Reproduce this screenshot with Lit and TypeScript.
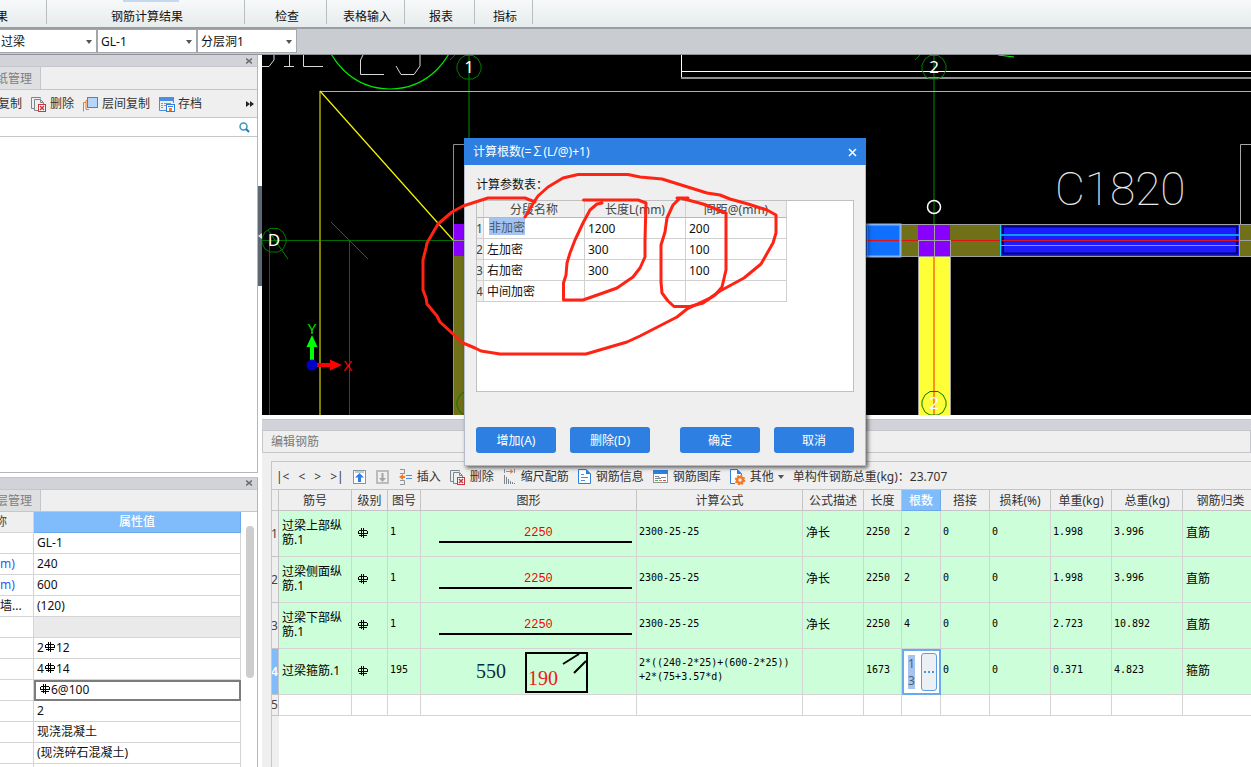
import { LitElement, html, svg, css, nothing } from "lit";
import { customElement } from "lit/decorators.js";
import { classMap } from "lit/directives/class-map.js";

const base = css`
  * { box-sizing: border-box; }
  :host {
    font: 12px/16px "Noto Sans", "Noto Sans CJK SC", sans-serif;
    color: #111;
  }
  button {
    font: inherit;
    color: inherit;
    border: 0;
    padding: 0;
    background: none;
    white-space: nowrap;
  }
  input, select, textarea {
    font: inherit;
    color: inherit;
    border: 0;
    margin: 0;
    padding: 0;
    border-radius: 0;
    outline: 0;
    appearance: none;
  }
  table { border-collapse: separate; border-spacing: 0; table-layout: fixed; }
  th, td { padding: 0; font-weight: 400; white-space: nowrap; overflow: hidden; }
  svg { display: block; flex: none; }
  .tool { display: flex; align-items: center; gap: 4px; }
`;

/* Grade symbol of HRB400 bars. */
const grade = html`<svg class="grade" width="10" height="10" viewBox="0 0 10 10" role="img" aria-label="三级钢" fill="none" stroke="#000" shape-rendering="crispEdges">
  <path d="M1 2.500H9M.5 3V6M9.500 3V6M0 5.500H10M1 7.500H9M3.500 0V9M5.500 0V10" />
</svg>`;

const icons = {
  remove: html`<svg width="16" height="16" viewBox="0 0 16 16" fill="none" stroke="#7c868e">
    <path d="M3 12.500H.5V1.500H9.500V2.500" /><path d="M7 14.500H3.500V3.500H9.500L12.500 6.500V8M9.500 4V6.500H12" />
    <rect x="7.500" y="8.500" width="7" height="7" fill="#fff" stroke="#c9373c" /><path d="M9 10l4 4M13 10l-4 4" stroke="#c9373c" stroke-width="1.500" /></svg>`,
  layers: html`<svg width="16" height="16" viewBox="0 0 16 16" fill="none">
    <path d="M3 6.500H.5V15.500M5 4.500H3V13.500H6" stroke="#f07a28" />
    <rect x="4.500" y="1.500" width="10" height="10" fill="#b5d6fb" stroke="#3f87d6" /></svg>`,
  archive: html`<svg width="16" height="16" viewBox="0 0 16 16" fill="none">
    <path d="M.5 4V14.500H7" stroke="#4a8fdf" /><path d="M14.500 4V7" stroke="#4a8fdf" /><rect width="15" height="4" y="1" fill="#4a8fdf" />
    <path d="M2 7.500h2M2 9.500h2M2 11.500h2M5 7.500h7M5 9.500h2" stroke="#8b959c" />
    <rect x="7.500" y="8.500" width="8" height="7" fill="#fff" stroke="#2d7fe1" /><rect x="10" y="12" width="3" height="3" fill="#f07a28" /><path d="M9 10.500h5" stroke="#2d7fe1" /></svg>`,
  up: html`<svg width="14" height="14" viewBox="0 0 14 14" fill="none"><rect x=".5" y=".5" width="12" height="13" fill="#fff" stroke="#8a949b" />
    <path d="M2 2h9" stroke="#8a949b" /><path d="M6.500 3l4.500 4.500H8V12H5V7.500H2z" fill="#2d7fe1" /></svg>`,
  down: html`<svg width="14" height="14" viewBox="0 0 14 14" fill="none"><rect x="1" y="1" width="11" height="12" stroke="#bcbcbc" stroke-width="2" />
    <path d="M6.500 12L3 8H5.500V3h2V8H10z" fill="#a4a4a4" /></svg>`,
  insert: html`<svg width="14" height="16" viewBox="0 0 14 16" fill="none">
    <path d="M1 .5H5.500V4.500H1M1 11.500H5.500V15.500H1" stroke="#8a949b" /><path d="M7 6.500h6M7 9.500h6" stroke="#4a8fdf" />
    <path d="M0 8l4-3v2h2v2H4v2z" fill="#f07a28" /></svg>`,
  scale: html`<svg width="14" height="16" viewBox="0 0 14 16" fill="none">
    <path d="M1.500 0V4M11.500 0V4" stroke="#8a949b" /><path d="M3 2.500h6" stroke="#f07a28" /><path d="M7.500 0l3 2.500-3 2.500z" fill="#f07a28" />
    <path d="M1.500 6V15M3.500 8V15M5.500 10V15M7.500 12V15M9.500 13V15M11.500 14V15" stroke="#7c868e" /></svg>`,
  info: html`<svg width="14" height="16" viewBox="0 0 14 16" fill="none">
    <path d="M.5 .5H8L12.500 5V14.500H.5z" fill="#fff" stroke="#2d7fe1" /><path d="M8 0v5h5z" fill="#2d7fe1" />
    <path d="M3 5.500h3M3 8.500h7M3 11.500h4" stroke="#4a8fdf" /></svg>`,
  gallery: html`<svg width="16" height="14" viewBox="0 0 16 14" fill="none">
    <rect x=".5" y=".5" width="14" height="12" fill="#fff" stroke="#8a949b" /><rect width="15" height="4" fill="#2d7fe1" />
    <path d="M2 6.500h4v2H2M8 7.500h5M6 8.500h2" stroke="#7c868e" /><path d="M2 10.500h3" stroke="#4caf50" /><path d="M6 10.500h3" stroke="#f07a28" /><path d="M10 10.500h3" stroke="#e04848" /></svg>`,
  other: html`<svg width="16" height="16" viewBox="0 0 16 16" fill="none">
    <path d="M5 14.500H.5V.5H7L11.500 5V6" fill="#fff" stroke="#2d7fe1" /><path d="M7 0v5h5z" fill="#2d7fe1" />
    <circle cx="10" cy="11" r="3" stroke="#f07a28" stroke-width="2.500" /><circle cx="10" cy="11" r="4.500" stroke="#f07a28" stroke-width="1.500" stroke-dasharray="2 1.500" /></svg>`,
};

const arrow = html`<svg width="6" height="4" viewBox="0 0 6 4"><path d="M0 0h6L3 4z" fill="#555" /></svg>`;

@customElement("ribbon-bar")
class RibbonBar extends LitElement {
  static styles = [base, css`
    :host { display: block; }
    .tabs {
      display: flex;
      height: 29px;
      border-bottom: 2px solid #9a9ea3;
      background: linear-gradient(#f7f9fa, #e6ebec);
      overflow: hidden;
    }
    .tab { flex: none; height: 27px; display: grid; align-items: center; padding: 7px 0 0 2px; position: relative; }
    .tab::after { content: ""; position: absolute; right: 0; top: 0; height: 24px; border-right: 1px solid #b9bdc0; }
    .w0 { width: 47px; } .w1 { width: 198px; } .w2 { width: 82px; }
    .w3 { width: 78px; } .w4 { width: 70px; } .w5 { width: 58px; }
    .w0 { justify-items: start; padding-left: 0; text-indent: -4px; }
    .w1::before { content: ""; position: absolute; left: 76px; top: 0; width: 56px; height: 2px; background: #c6d8f0; }
    .combos { display: flex; height: 26px; background: #c9ccd1; border-bottom: 1px solid #8f9398; }
    .combo { position: relative; width: 100px; height: 24px; display: flex; }
    .combo.first { width: 97px; }
    .combo select {
      width: 100%; height: 24px; border: 1px solid #a3a6aa; background: #fff; padding: 2px 3px 0;
    }
    .first select { border-left: 0; padding-left: 1px; }
    .combo svg { position: absolute; right: 5px; top: 11px; pointer-events: none; }
  `];
  render() {
    const names = ["果", "钢筋计算结果", "检查", "表格输入", "报表", "指标"];
    return html`
      <nav class="tabs">${names.map((n, i) => html`<button class="tab w${i}">${n}</button>`)}</nav>
      <div class="combos">
        ${["过梁", "GL-1", "分层洞1"].map((v, i) => html`
          <label class="combo ${i ? "" : "first"}"><select aria-label=${v}><option>${v}</option></select>${arrow}</label>`)}
      </div>`;
  }
}

@customElement("side-dock")
class SideDock extends LitElement {
  static styles = [base, css`
    :host { display: flex; flex-direction: column; gap: 4px; background: #fff; overflow: hidden; }
    .panel {
      display: flex; flex-direction: column; min-height: 0; overflow: hidden;
      border: 1px solid #b4b6ba; border-left: 0; background: #fff;
    }
    .upper { flex: 418 1 0; border-top: 0; }
    .lower { flex: 290 1 0; border-bottom: 0; border-top-color: #c4c6cb; }
    .strip {
      flex: none; height: 12px; background: #d2d3d8; border-bottom: 1px solid #c4c6cb;
      display: flex; justify-content: flex-end; align-items: center; padding-right: 5px;
    }
    .tabs { flex: none; height: 23px; background: #efefef; border-bottom: 1px solid #c4c6cb; display: flex; overflow: hidden; }
    .lower .tabs { height: 22px; }
    .tab { width: 41px; padding-top: 2px; background: #dedfe1; border-right: 1px solid #c4c6cb; color: #7e7e7e; text-align: left; text-indent: -4px; overflow: hidden; }
    .tools { flex: none; height: 28px; padding-top: 1px; background: #efefef; border-bottom: 1px solid #c4c6cb; display: flex; align-items: center; gap: 9px; color: #333; }
    .tools .tool { gap: 3px; }
    .tools .tool:first-child { width: 22px; text-indent: -2px; overflow: hidden; }
    .more { margin-left: auto; padding-right: 3px; }
    .search { flex: none; height: 19px; border-bottom: 1px solid #c4c6cb; display: flex; align-items: center; padding-right: 7px; }
    .search input { flex: 1; min-width: 0; height: 16px; }
    .props { display: flex; min-height: 0; flex: 1; }
    table { flex: 1; align-self: flex-start; }
    .name { width: 34px; }
    tr { height: 21px; }
    th, td { height: 21px; padding-top: 1px; border-right: 1px solid #d4d4d4; border-bottom: 1px solid #d4d4d4; }
    th { background: #efefef; text-align: left; text-indent: -5px; color: #444; }
    th.value { background: #80bbfc; border-color: #6ca8ea; color: #fff; text-align: center; text-indent: 0; font-weight: 500; }
    td.value { padding-left: 3px; }
    .link { color: #2c5cf0; }
    td.shade { background: #eaeaea; }
    td.active { outline: 2px solid #7c7c7c; outline-offset: -2px; padding-left: 5px; }
    .cell { display: inline-flex; align-items: center; vertical-align: top; }
    .grade { margin: 0 1px 2px 1px; }
    .bar { width: 16px; flex: none; padding: 14px 3px 0 5px; }
    .thumb { width: 8px; height: 152px; border-radius: 4px; background: #cdcdcd; }
  `];
  render() {
    const close = html`<svg width="6" height="6" viewBox="0 0 6 6" stroke="#6c6c6c" stroke-width="1.500"><path d="M0 .5l6 5M6 .5l-6 5" /></svg>`;
    const rows: [unknown, unknown, string?][] = [
      ["", "GL-1"], ["m)", "240"], ["m)", "600"], ["墙...", "(120)"], ["", "", "shade"],
      ["", html`2${grade}12`], ["", html`4${grade}14`], ["", html`${grade}6@100`, "active"],
      ["", "2"], ["", "现浇混凝土"], ["", "(现浇碎石混凝土)"], ["", ""],
    ];
    return html`
      <section class="panel upper">
        <div class="strip"><button aria-label="关闭">${close}</button></div>
        <div class="tabs"><button class="tab">纸管理</button></div>
        <div class="tools">
          <button class="tool">复制</button>
          <button class="tool">${icons.remove}删除</button>
          <button class="tool">${icons.layers}层间复制</button>
          <button class="tool">${icons.archive}存档</button>
          <button class="more" aria-label="更多"><svg width="8" height="6" viewBox="0 0 8 6"><path d="M0 0l4 3-4 3zM4 0l4 3-4 3z" fill="#222" /></svg></button>
        </div>
        <div class="search"><input type="text" aria-label="搜索" />
          <svg width="11" height="11" viewBox="0 0 11 11" fill="none"><circle cx="4.500" cy="4.500" r="3.500" stroke="#3e94c8" stroke-width="1.500" /><path d="M7 7l3 3" stroke="#2878b0" stroke-width="2" /></svg>
        </div>
      </section>
      <section class="panel lower">
        <div class="strip"><button aria-label="关闭">${close}</button></div>
        <div class="tabs"><button class="tab">层管理</button></div>
        <div class="props">
          <table>
            <thead><tr><th class="name">称</th><th class="value">属性值</th></tr></thead>
            <tbody>${rows.map(([n, v, k]) => html`<tr>
              <td class=${classMap({ link: n === "m)" })}>${n}</td>
              <td class="value ${k ?? ""}"><span class="cell">${v}</span></td></tr>`)}</tbody>
          </table>
          <div class="bar"><div class="thumb"></div></div>
        </div>
      </section>`;
  }
}

@customElement("plan-view")
class PlanView extends LitElement {
  static styles = [base, css`
    :host { display: block; background: #000; overflow: hidden; }
    svg { width: 100%; height: 100%; }
    .mark { font: 17px "Noto Sans", sans-serif; fill: #fff; text-anchor: middle; }
    .label { font: 100 46px "Roboto", sans-serif; fill: #e8e8e8; }
    .axis { font: 15px "Noto Sans", sans-serif; text-anchor: middle; }
  `];
  bubble(x: number, y: number, t: string) {
    return svg`<path transform="translate(${x} ${y})" d="M-4-11.500H4L9-8L12-2V3L9 9L4 12H-4L-9 9L-12 3V-2L-9-8z" stroke="#007d00" fill="none" />
      <text class="mark" x=${x} y=${y + 6}>${t}</text>`;
  }
  render() {
    return html`<svg viewBox="262 55 989 360" preserveAspectRatio="xMinYMin slice" fill="none" role="img" aria-label="平面图">
      <g stroke="#d8d8d8">
        <path d="M262 66.500H269L274 60V55M289.500 55V66M284 66.500H294M303.500 55V66.500H323M363 55L360.500 60V74.500H384M396 66L401 74.500H414L420 66V55" />
      </g>
      <circle cx="390" cy="22.500" r="66.500" stroke="#00e800" stroke-width="1.200" />
      <path d="M998 55L1014 57" stroke="#00ff00" />
      <path d="M469 55V138M934 55V224" stroke="#004800" stroke-width="2" />
      <path d="M450 60L455 55M915 60L920 55" stroke="#007000" />
      <path d="M262 240.500H453M269.500 240V415M349.500 240V415" stroke="#006c00" />
      <path d="M331 222L368 259M268 230L288 259" stroke="#008400" />
      <path d="M681.500 55V77M681 71.500H1251" stroke="#fff" /><path d="M681 78H1251" stroke="#909090" stroke-width="2" />
      <path d="M320 91.500H1251" stroke="#c8c400" /><path d="M320 91V415" stroke="#7e7e00" stroke-width="2" />
      <path d="M320 91L453 240" stroke="#f6f600" stroke-width="1.200" />
      <rect x="453" y="224" width="33" height="32" fill="#8a00ff" /><rect x="453" y="256" width="33" height="159" fill="#707018" />
      <path d="M453.500 415V144.500H480M453 240.500H480" stroke="#909090" />
      ${this.bubble(469, 67, "1")} ${this.bubble(934, 67, "2")} ${this.bubble(274, 240, "D")} ${this.bubble(469, 403, "1")}
      <path d="M312 347V361" stroke="#00ff00" stroke-width="4" /><path d="M312 335l5.500 12h-11z" fill="#00ff00" />
      <path d="M317 365H331" stroke="#f00" stroke-width="4" /><path d="M342 365l-12-5.500v11z" fill="#f00" />
      <circle cx="312" cy="365" r="5.500" fill="#0000c4" />
      <text class="axis" x="312" y="334" fill="#00e000">Y</text><text class="axis" x="348" y="371" fill="#f00000">X</text>
      <circle cx="934" cy="207" r="6.500" stroke="#fff" stroke-width="1.500" />
      <text class="label" x="1055" y="205">C1820</text>
      <path d="M1240.500 240V144.500H1251" stroke="#a8a8a8" />
      <rect x="850" y="224" width="401" height="32" fill="#707018" />
      <rect x="918" y="224" width="32" height="32" fill="#8a00ff" />
      <rect x="918" y="256" width="32" height="159" fill="#ffff38" />
      <rect x="850" y="225" width="50" height="31" fill="#0f70ff" />
      <rect x="1001" y="225" width="238" height="31" fill="#1c1cff" />
      <rect x="1003" y="226.500" width="234" height="27" stroke="#000078" stroke-width="2" />
      <path d="M850 240.500H1240" stroke="#e01414" />
      <path d="M1001 235H1240" stroke="#1496f0" stroke-width="2" /><path d="M1001 245.500H1240M1000.500 225V256M867.500 225V256" stroke="#00d8ff" />
      <path d="M850 224.500H1251M850 256.500H1251M1240 240.500H1251M918 240.500H950M934.500 224V256M918.500 240V415M950.500 240V415M1239.500 224V256" stroke="#a0a0a0" />
      <path d="M850 224.500H900.500V256.500H850" stroke="#8ab4f0" stroke-width="2" />
      <path d="M934 257V415" stroke="#ff9020" stroke-width="2" />
      ${this.bubble(934, 403, "2")}
    </svg>`;
  }
}

interface Bar { name: string; fig: string; shape: unknown; formula: unknown; desc: string; len: string; count: string; unit: string; total: string; kind: string; }

@customElement("rebar-editor")
class RebarEditor extends LitElement {
  static styles = [base, css`
    :host { display: flex; flex-direction: column; background: #efefef; overflow: hidden; }
    .strip { flex: none; height: 16px; background: #d2d3d8; border-top: 4px solid #fff; box-shadow: inset 0 1px #c4c6cb, inset 0 -1px #c4c6cb; }
    .caption { flex: none; height: 22px; border: 1px solid #c4c6cb; border-top: 0; padding: 3px 8px; color: #7a7a7a; }
    .box { flex: 1; min-height: 0; margin: 8px 0 0 9px; border-left: 1px solid #c4c6cb; border-top: 1px solid #c4c6cb; display: flex; flex-direction: column; overflow: hidden; }
    .tools { flex: none; height: 27px; display: flex; align-items: center; gap: 9px; padding: 3px 0 0 4px; color: #333; white-space: nowrap; }
    .nav { display: flex; gap: 9px; }
    .nav button { min-width: 6px; }
    .sheet { flex: 1; min-height: 0; overflow: hidden; background: linear-gradient(90deg, #efefef 7px, #fff 7px); }
    table { width: 987px; border-top: 1px solid #c4c4c4; }
    th, td { border-right: 1px solid #d4d4d4; border-bottom: 1px solid #d4d4d4; }
    thead th { height: 21px; padding-top: 1px; background: #efefef; border-color: #c4c4c4; color: #333; }
    thead .on { background: #80bbfc; color: #fff; font-weight: 500; border-color: #6ca8ea; }
    tbody th { background: #efefef; color: #444; border-color: #c4c4c4; text-indent: -1px; }
    tbody th.on { background: #80bbfc; color: #fff; font-weight: 600; }
    tbody td { height: 46px; background: #ccffd9; padding: 0 3px 2px; color: #000; }
    tbody .blank td { height: 21px; background: #fff; }
    tbody td.num { font: 10px/14px "DejaVu Sans Mono", monospace; padding: 0 2px 3px; }
    .title { line-height: 14px; white-space: normal; word-break: break-all; }
    tbody td.shape { padding: 0; }
    .grade { margin-left: 3px; }
    .c0 { width: 7px; } .c1 { width: 73px; } .c2 { width: 36px; } .c3 { width: 33px; } .c4 { width: 216px; }
    .c5 { width: 166px; } .c6 { width: 61px; } .c7 { width: 38px; } .c8 { width: 39px; } .c9 { width: 49px; }
    .c10 { width: 61px; } .c11 { width: 61px; } .c12 { width: 71px; } .c13 { width: 76px; }
    tbody td.edit { padding: 0; background: #fff; outline: 2px solid #6aa9ea; outline-offset: -2px; }
    .field { display: flex; align-items: center; padding-left: 6px; gap: 6px; }
    .field textarea { width: 7px; height: 34px; line-height: 17px; resize: none; overflow: hidden; word-break: break-all; background: #a4c3ee; color: #555f70; }
    .field button { width: 16px; height: 38px; border: 1px solid #5b9fe0; border-radius: 3px; background: #ecf0f4; display: grid; place-items: center; }
    .dim { font: 12px "Liberation Mono", monospace; fill: #f00000; }
    .big { font: 20px "Liberation Serif", serif; }
  `];
  render() {
    const line = html`<svg width="215" height="45" viewBox="0 0 215 45"><text class="dim" x="103" y="25">2250</text><path d="M18 31H211" stroke="#000" stroke-width="2" /></svg>`;
    const stirrup = html`<svg width="215" height="45" viewBox="0 0 215 45" fill="none" stroke="#000" stroke-width="2">
      <rect x="105" y="4" width="61" height="39" /><path d="M142 15L158 5M153 24L165 12" />
      <text class="big" x="55" y="29" fill="#0c2c34" stroke="none">550</text><text class="big" x="107" y="36" fill="#f01818" stroke="none">190</text></svg>`;
    const bars: Bar[] = [
      { name: "过梁上部纵筋.1", fig: "1", shape: line, formula: "2300-25-25", desc: "净长", len: "2250", count: "2", unit: "1.998", total: "3.996", kind: "直筋" },
      { name: "过梁侧面纵筋.1", fig: "1", shape: line, formula: "2300-25-25", desc: "净长", len: "2250", count: "2", unit: "1.998", total: "3.996", kind: "直筋" },
      { name: "过梁下部纵筋.1", fig: "1", shape: line, formula: "2300-25-25", desc: "净长", len: "2250", count: "4", unit: "2.723", total: "10.892", kind: "直筋" },
      { name: "过梁箍筋.1", fig: "195", shape: stirrup, formula: html`2*((240-2*25)+(600-2*25))<br />+2*(75+3.57*d)`, desc: "", len: "1673", count: "13", unit: "0.371", total: "4.823", kind: "箍筋" },
    ];
    const heads = ["", "筋号", "级别", "图号", "图形", "计算公式", "公式描述", "长度", "根数", "搭接", "损耗(%)", "单重(kg)", "总重(kg)", "钢筋归类"];
    return html`
      <div class="strip"></div>
      <div class="caption">编辑钢筋</div>
      <div class="box">
        <div class="tools">
          <div class="nav"><button>|&lt;</button><button>&lt;</button><button>&gt;</button><button>&gt;|</button></div>
          <button aria-label="上移">${icons.up}</button>
          <button aria-label="下移">${icons.down}</button>
          <button class="tool">${icons.insert}插入</button>
          <button class="tool">${icons.remove}删除</button>
          <button class="tool">${icons.scale}缩尺配筋</button>
          <button class="tool">${icons.info}钢筋信息</button>
          <button class="tool">${icons.gallery}钢筋图库</button>
          <button class="tool">${icons.other}其他 ${arrow}</button>
          <span>单构件钢筋总重(kg)：23.707</span>
        </div>
        <div class="sheet"><table>
          <thead><tr>${heads.map((h, i) => html`<th class="c${i} ${i === 8 ? "on" : ""}">${h}</th>`)}</tr></thead>
          <tbody>
            ${bars.map((b, i) => html`<tr>
              <th class=${i === 3 ? "on" : ""}>${i + 1}</th>
              <td class="title">${b.name}</td><td>${grade}</td><td class="num">${b.fig}</td>
              <td class="shape">${b.shape}</td><td class="num">${b.formula}</td><td>${b.desc}</td><td class="num">${b.len}</td>
              ${i === 3
                ? html`<td class="edit"><div class="field"><textarea aria-label="根数" .value=${b.count}></textarea><button aria-label="选择"><svg width="11" height="2" viewBox="0 0 11 2"><path d="M0 0h2v2H0zM4 0h2v2H4zM8 0h2v2H8z" fill="#4a95e0" /></svg></button></div></td>`
                : html`<td class="num">${b.count}</td>`}
              <td class="num">0</td><td class="num">0</td><td class="num">${b.unit}</td><td class="num">${b.total}</td><td>${b.kind}</td></tr>`)}
            <tr class="blank"><th>5</th>${heads.slice(1).map(() => html`<td></td>`)}</tr>
          </tbody>
        </table></div>
      </div>`;
  }
}

@customElement("count-dialog")
class CountDialog extends LitElement {
  static styles = [base, css`
    :host { display: block; width: 402px; background: #efefef; border: 1px solid #b4bccb; border-top: 0; box-shadow: 2px 2px 4px #0009; }
    .head { height: 27px; margin: 0 -1px; padding: 1px 9px 0; background: #2d7fe1; color: #fff; display: flex; align-items: center; justify-content: space-between; }
    .body { padding: 12px 11px; }
    .body > label { display: block; margin-bottom: 7px; }
    .list { height: 192px; border: 1px solid #c0c0c0; background: #fff; margin-bottom: 35px; }
    table { width: 310px; }
    th, td { height: 21px; padding-top: 1px; border-right: 1px solid #d0d0d0; border-bottom: 1px solid #d0d0d0; }
    thead th { height: 17px; line-height: 15px; background: #efefef; color: #444; border-bottom-color: #b8b8b8; }
    tbody th { background: #efefef; color: #444; text-indent: -1px; }
    td { padding-left: 3px; }
    td.first { padding: 0 0 0 5px; }
    .idx { width: 7px; }
    input { width: 36px; height: 17px; background: #a4c3ee; color: #4c5a70; display: block; margin-bottom: 3px; }
    .actions { display: grid; grid-template-columns: 80px 80px 1fr 80px 80px; column-gap: 14px; }
    .actions button { height: 26px; border-radius: 3px; background: #2d7fe1; color: #fff; padding-top: 1px; }
    .actions .ok { grid-column: 4; }
  `];
  render() {
    const rows = [["非加密", "1200", "200"], ["左加密", "300", "100"], ["右加密", "300", "100"], ["中间加密", "", ""]];
    return html`
      <div class="head"><span>计算根数(=∑(L/@)+1)</span>
        <button aria-label="关闭"><svg width="9" height="9" viewBox="0 0 9 9" stroke="#fff" stroke-width="1.500"><path d="M1 1l7 7M8 1l-7 7" /></svg></button></div>
      <div class="body">
        <label for="seg">计算参数表：</label>
        <div class="list"><table>
          <thead><tr><th class="idx"></th><th>分段名称</th><th>长度L(mm)</th><th>间距@(mm)</th></tr></thead>
          <tbody>${rows.map((r, i) => html`<tr><th>${i + 1}</th>
            <td class=${i ? "" : "first"}>${i ? r[0] : html`<input id="seg" .value=${r[0]} />`}</td>
            <td>${r[1] || nothing}</td><td>${r[2] || nothing}</td></tr>`)}</tbody>
        </table></div>
        <div class="actions"><button>增加(A)</button><button>删除(D)</button><button class="ok">确定</button><button>取消</button></div>
      </div>`;
  }
}

@customElement("app-root")
class AppRoot extends LitElement {
  static styles = [base, css`
    :host { display: flex; flex-direction: column; height: 100vh; position: relative; overflow: hidden; background: #fff; }
    .main { flex: 1; min-height: 0; display: flex; }
    side-dock { width: 258px; flex: none; }
    .gutter { width: 4px; flex: none; padding-top: 131px; }
    .handle { display: grid; width: 4px; height: 100px; background: #5c6872; align-items: center; }
    .work { flex: 1; min-width: 0; display: flex; flex-direction: column; }
    plan-view { flex: 360 1 0; min-height: 0; }
    rebar-editor { flex: 352 1 0; min-height: 0; }
    count-dialog { position: absolute; left: 464px; top: 138px; }
    .ink { position: absolute; left: 420px; top: 170px; pointer-events: none; }
  `];
  render() {
    return html`
      <ribbon-bar></ribbon-bar>
      <div class="main">
        <side-dock></side-dock>
        <div class="gutter"><button class="handle" aria-label="折叠"><svg width="4" height="6" viewBox="0 0 4 6"><path d="M4 0v6L0 3z" fill="#ddd" /></svg></button></div>
        <div class="work"><plan-view></plan-view><rebar-editor></rebar-editor></div>
      </div>
      <count-dialog></count-dialog>
      <svg class="ink" width="360" height="188" viewBox="420 170 360 188" fill="none" stroke="#ff2314" stroke-width="3" stroke-linejoin="round" stroke-linecap="round">
        <path d="M525 217L534 202L538 196L548 187L563 178L578 174.500H628L640 177L662 179L707 193L720 195L730 199L748 204L767 210L776 215V233L773 243L769 250L761 264L744 278L720 291L710 298L687 309L677 317L640 336L627 342L586 354H500L481 351L475 348L463 343L452 333L440 322L437 316L427 304L426 298L423 290V260L426 248L427 243L438 224L452 212L463 206L488 198H525L535 202" />
        <path d="M602 203L597 204L590 210L583 223L575 240L570 253L567 263L566 275L563.500 283V300H583L603 293L617 288L633 277L640 268L645 257V240L646 203L638 200H583.500" />
        <path d="M677 198H688H680L673 205L667 218L665 232L661 245V282L662 293L668 301L674 306.500H690L703 303L715 295L722 287L726 270V213L703 204L688 200L680 198" />
      </svg>`;
  }
}
